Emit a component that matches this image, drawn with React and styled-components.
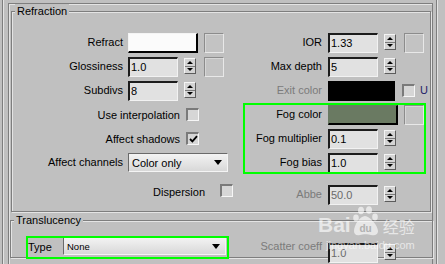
import styled, { createGlobalStyle } from 'styled-components';

const GlobalStyle = createGlobalStyle`
  html, body {
    margin: 0;
    padding: 0;
    background: #c0c0c0;
  }
  body {
    font-family: "Liberation Sans", Arial, sans-serif;
    font-size: 11px;
    color: #000;
  }
`;

const Screen = styled.div`
  position: relative;
  width: 445px;
  height: 264px;
  overflow: hidden;
  background: #c0c0c0;
  padding-left: 2px;
  box-sizing: border-box;
`;

const Rollout = styled.div`
  width: 435px;
  height: 100%;
  box-sizing: border-box;
  border-left: 1px solid #7e7e7e;
  border-right: 1px solid #7e7e7e;
  box-shadow: inset 1px 0 0 #e4e4e4, 1px 0 0 #e4e4e4;
  padding: 3px 3px 0 5px;
`;

const Body = styled.div`
  height: 100%;
  box-sizing: border-box;
  border: 1px solid #7e7e7e;
  border-bottom: none;
  box-shadow: inset 1px 1px 0 #e4e4e4;
  padding: 7px 1px 0 2px;
`;

const GroupBox = styled.div`
  position: relative;
  border: 1px solid #7e7e7e;
  box-shadow: inset 1px 1px 0 #e4e4e4, 1px 1px 0 #e4e4e4;
  margin: ${p => p.$margin || '0'};
  padding: ${p => p.$padding || '0'};
`;

const Legend = styled.span`
  position: absolute;
  top: -8px;
  left: 3px;
  padding: 0 2px;
  background: #c0c0c0;
  line-height: 14px;
  font-size: 11px;
`;

const Rows = styled.div`
  display: flex;
  flex-direction: column;
  gap: 4px;
`;

const Row = styled.div`
  display: grid;
  grid-template-columns: ${p => p.$cols || '116px 100px 100px 100px'};
  height: 20px;
  margin-top: ${p => p.$extra || 0}px;
`;

const Label = styled.div`
  display: flex;
  justify-content: ${p => (p.$start ? 'flex-start' : 'flex-end')};
  padding-right: ${p => p.$pad ?? 5}px;
  line-height: 18px;
  margin-top: ${p => p.$top || 0}px;
  white-space: nowrap;
  color: ${p => (p.$disabled ? '#7b7b7b' : '#000')};
`;

const Controls = styled.div`
  display: flex;
  align-items: flex-start;
  gap: 6px;
  margin-top: ${p => p.$top || 0}px;
`;

const CheckCell = styled.div`
  grid-column: 1 / 3;
  display: flex;
  justify-content: flex-end;
  align-items: flex-start;
  gap: ${p => p.$gap}px;
  margin-right: ${p => p.$inset}px;
`;

const Swatch = styled.div`
  width: 70px;
  height: 20px;
  box-sizing: border-box;
  background: ${p => p.$color};
  border-style: solid;
  border-width: 1px 2px 2px 1px;
  border-color: ${p => p.$light} #000 #000 ${p => p.$light};
`;

const MapButton = styled.div`
  width: 20px;
  height: 20px;
  box-sizing: border-box;
  margin-left: ${p => p.$shift || 0}px;
  background: #c3c3c3;
  border: 1px solid;
  border-color: #8c8c8c #e8e8e8 #e8e8e8 #8c8c8c;
  box-shadow: inset 1px 1px 0 #d6d6d6;
`;

const NumberBox = styled.div`
  width: 50px;
  height: 20px;
  box-sizing: border-box;
  background: #e1e1e1;
  border-style: solid;
  border-width: 2px 1px 1px 2px;
  border-color: #1c1c1c #f2f2f2 #f2f2f2 #1c1c1c;
  padding-left: 1px;
  line-height: 16px;
  color: ${p => (p.$disabled ? '#6a6a6a' : '#000')};
`;

const Spinner = styled.div`
  width: 12px;
  height: 16px;
  margin-top: 1px;
  box-sizing: border-box;
  background: #d4d4d4;
  border: 1px solid;
  border-color: #f4f4f4 #5c5c5c #5c5c5c #f4f4f4;
  display: flex;
  flex-direction: column;
`;

const SpinHalf = styled.div`
  flex: 1;
  display: flex;
  align-items: center;
  justify-content: center;
  & + & {
    border-top: 1px solid #7a7a7a;
  }
`;

const Tri = styled.span`
  width: 0;
  height: 0;
  border-left: 3px solid transparent;
  border-right: 3px solid transparent;
  ${p =>
    p.$up
      ? 'border-bottom: 3px solid #000;'
      : 'border-top: 3px solid #000;'}
`;

const Check = styled.div`
  width: 13px;
  height: 13px;
  flex-shrink: 0;
  box-sizing: border-box;
  margin-top: ${p => p.$top ?? 3}px;
  margin-left: ${p => p.$shift || 0}px;
  background: #d6d6d6;
  border-style: solid;
  border-width: 2px 1px 1px 2px;
  border-color: #7a7a7a #f6f6f6 #f6f6f6 #7a7a7a;
  display: flex;
  align-items: center;
  justify-content: center;
`;

const Letter = styled.span`
  line-height: 18px;
  margin-left: -1px;
  color: #1e2268;
`;

const Select = styled.div`
  width: ${p => p.$w}px;
  height: ${p => p.$h}px;
  box-sizing: border-box;
  display: flex;
  align-items: center;
  justify-content: space-between;
  padding: 0 5px 0 3px;
  font-size: ${p => p.$size || 11}px;
  background: linear-gradient(#f3f3f3, #d8d8d8);
  border: 1px solid;
  border-color: #6a6a6a #f4f4f4 #f4f4f4 #6a6a6a;
`;

const Arrow = styled.span`
  width: 0;
  height: 0;
  border-left: 4.5px solid transparent;
  border-right: 4.5px solid transparent;
  border-top: 5px solid #000;
`;

const Highlight = styled.div`
  position: absolute;
  left: ${p => p.$x}px;
  top: ${p => p.$y}px;
  width: ${p => p.$w}px;
  height: ${p => p.$h}px;
  box-sizing: border-box;
  border: 2px solid #00ff00;
  pointer-events: none;
`;

const Watermark = styled.div`
  position: absolute;
  left: 318px;
  top: 206px;
  color: #fff;
  opacity: 0.62;
  display: flex;
  flex-direction: column;
  align-items: flex-end;
  pointer-events: none;
`;

const MarkTop = styled.div`
  display: flex;
  align-items: flex-end;
  gap: 2px;
`;

const MarkBai = styled.span`
  font-family: "Liberation Sans", Arial, sans-serif;
  font-weight: bold;
  font-size: 21px;
  line-height: 22px;
  margin-bottom: 1px;
`;

const MarkCn = styled.span`
  font-family: "Noto Sans CJK SC", sans-serif;
  font-size: 16px;
  line-height: 20px;
  margin-bottom: 1px;
`;

const MarkUrl = styled.span`
  font-size: 11px;
  line-height: 12px;
  margin-top: 2px;
`;

function Spin() {
  return (
    <Spinner>
      <SpinHalf>
        <Tri $up />
      </SpinHalf>
      <SpinHalf>
        <Tri />
      </SpinHalf>
    </Spinner>
  );
}

function NumField({ value, disabled, button }) {
  return (
    <Controls>
      <NumberBox $disabled={disabled}>{value}</NumberBox>
      <Spin />
      {button && <MapButton $shift={2} />}
    </Controls>
  );
}

function Tick() {
  return (
    <svg width="9" height="8" viewBox="0 0 9 8">
      <path d="M1 4 L3.4 6.4 L8 1.2" fill="none" stroke="#000" strokeWidth="1.8" />
    </svg>
  );
}

function Paw() {
  return (
    <svg width="28" height="31" viewBox="0 0 28 31">
      <g fill="#fff">
        <ellipse cx="8" cy="4.5" rx="3" ry="3.8" />
        <ellipse cx="16" cy="4" rx="3" ry="3.8" />
        <ellipse cx="3" cy="12" rx="2.8" ry="3.4" />
        <ellipse cx="22" cy="11" rx="2.8" ry="3.4" />
        <path d="M12 10 C17 10 25 20 25 25 C25 29 21 30 18 29 C15 28 10 28 7 29 C3 30 1 28 1 25 C1 19 7 10 12 10 Z" />
      </g>
      <text x="12.5" y="26" textAnchor="middle" fontSize="10" fontWeight="bold" fill="#a8a8a8" fontFamily="Liberation Sans, Arial, sans-serif">du</text>
    </svg>
  );
}

export default function App() {
  return (
    <>
      <GlobalStyle />
      <Screen>
        <Rollout>
          <Body>
            <GroupBox $padding="21px 0 6px 0">
              <Legend>Refraction</Legend>
              <Rows>
                <Row>
                  <Label>Refract</Label>
                  <Controls>
                    <Swatch $color="#fbfbfb" $light="#f4f4f4" />
                    <MapButton />
                  </Controls>
                  <Label $pad={6}>IOR</Label>
                  <NumField value="1.33" button />
                </Row>
                <Row>
                  <Label>Glossiness</Label>
                  <NumField value="1.0" button />
                  <Label $pad={6}>Max depth</Label>
                  <NumField value="5" />
                </Row>
                <Row>
                  <Label>Subdivs</Label>
                  <NumField value="8" />
                  <Label $pad={6} $disabled>Exit color</Label>
                  <Controls>
                    <Swatch $color="#000" $light="#000" />
                    <Check $shift={1} />
                    <Letter>U</Letter>
                  </Controls>
                </Row>
                <Row>
                  <CheckCell $gap={6} $inset={29}>
                    <Label $pad={0} $top={1}>Use interpolation</Label>
                    <Check />
                  </CheckCell>
                  <Label $pad={6}>Fog color</Label>
                  <Controls>
                    <Swatch $color="#6a7a62" $light="#6a7a62" />
                    <MapButton />
                  </Controls>
                </Row>
                <Row>
                  <CheckCell $gap={6} $inset={29}>
                    <Label $pad={0} $top={1}>Affect shadows</Label>
                    <Check>
                      <Tick />
                    </Check>
                  </CheckCell>
                  <Label $pad={6}>Fog multiplier</Label>
                  <NumField value="0.1" />
                </Row>
                <Row>
                  <Label>Affect channels</Label>
                  <Controls>
                    <Select $w={102} $h={19}>
                      Color only
                      <Arrow />
                    </Select>
                  </Controls>
                  <Label $pad={6}>Fog bias</Label>
                  <NumField value="1.0" />
                </Row>
                <Row $extra={8}>
                  <CheckCell $gap={15} $inset={-5}>
                    <Label $pad={0} $top={-2}>Dispersion</Label>
                    <Check $top={-1} />
                  </CheckCell>
                  <Label $pad={6} $disabled>Abbe</Label>
                  <NumField value="50.0" disabled />
                </Row>
              </Rows>
            </GroupBox>
            <GroupBox $margin="8px -2px 0 -1px" $padding="16px 0 0 17px">
              <Legend>Translucency</Legend>
              <Row $cols="35px 163px 102px 100px">
                <Label $pad={4} $top={1} $start>
                  Type
                </Label>
                <Controls>
                  <Select $w={163} $h={18} $size={9.5}>
                    None
                    <Arrow />
                  </Select>
                </Controls>
                <Label $pad={6} $disabled>Scatter coeff</Label>
                <Controls $top={6}>
                  <NumberBox $disabled>1.0</NumberBox>
                  <Spin />
                </Controls>
              </Row>
            </GroupBox>
          </Body>
        </Rollout>
        <Highlight $x={243} $y={103} $w={183} $h={71} />
        <Highlight $x={26} $y={236} $w={203} $h={23} />
        <Watermark>
          <MarkTop>
            <MarkBai>Bai</MarkBai>
            <Paw />
            <MarkCn>经验</MarkCn>
          </MarkTop>
          <MarkUrl>jingyan.baidu.com</MarkUrl>
        </Watermark>
      </Screen>
    </>
  );
}
